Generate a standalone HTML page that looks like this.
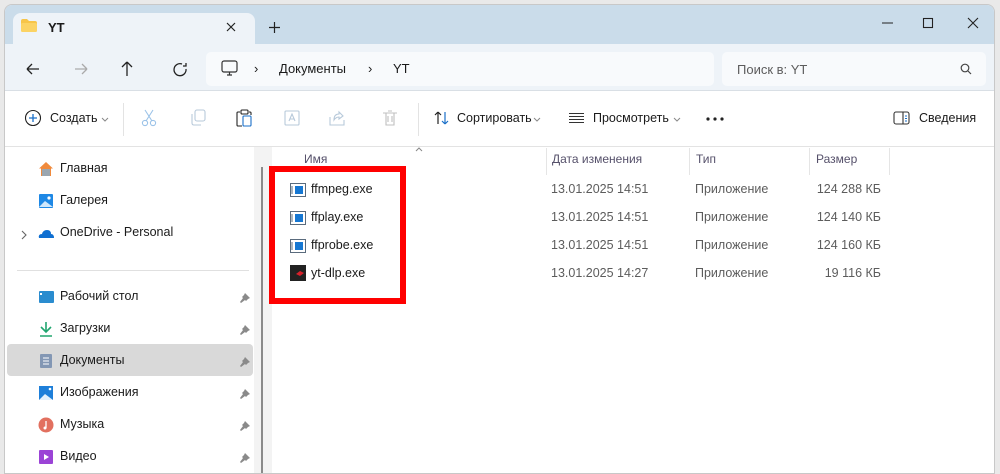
<!DOCTYPE html>
<html><head><meta charset="utf-8"><style>
*{margin:0;padding:0;box-sizing:border-box}
body{width:1000px;height:470px;overflow:hidden;background:#e9e9e9;font-family:"Segoe UI","Liberation Sans","Noto Sans CJK SC",sans-serif;font-size:12.5px;color:#1a1a1a;position:relative}
.win{position:absolute;left:4px;top:4px;width:991px;height:470px;background:#fff;border:1px solid #c8c8c8;border-radius:8px 8px 0 0;overflow:hidden}
.tabbar{position:absolute;left:0;top:0;width:100%;height:40px;background:#cadcea}
.tab{position:absolute;left:8px;top:8px;width:242px;height:36px;background:#eef3f8;border-radius:8px 8px 0 0}
.addr{position:absolute;left:0;top:39px;width:100%;height:47px;background:#eef3f8;border-bottom:1px solid #d9dfe5}
.box{position:absolute;background:#f8fafc;border-radius:5px}
.t{position:absolute;white-space:nowrap}
.tool{position:absolute;left:0;top:86px;width:100%;height:56px;background:#fff;border-bottom:1px solid #e3e3e3}
.side{position:absolute;left:0;top:142px;width:250px;height:330px;background:#fff}
.gut{position:absolute;left:249px;top:142px;width:18px;height:330px;background:#f3f3f3}
.ico{position:absolute;width:16px;height:16px}
.pin{position:absolute;left:234px;width:12px;height:12px}
.hdr{color:#55506a}
.gray{color:#5c5c5c}
</style></head><body>
<div class="win">
 <div class="tabbar"></div>
 <div class="tab"></div>
 <svg style="position:absolute;left:16px;top:14px" width="16" height="13"><path d="M0 2 Q0 0 2 0 H6 L8 2 H14 Q16 2 16 4 V11 Q16 13 14 13 H2 Q0 13 0 11Z" fill="#f7c549"/><rect x="0" y="4" width="16" height="9" rx="1.5" fill="#fbd364"/></svg>
 <div class="t" style="left:43px;top:15px;font-weight:bold;font-size:13px">YT</div>
 <svg style="position:absolute;left:221px;top:17px" width="10" height="10" stroke="#222" stroke-width="1.2"><path d="M1 1L9 9M9 1L1 9"/></svg>
 <svg style="position:absolute;left:264px;top:17px" width="11" height="11" stroke="#222" stroke-width="1.2"><path d="M5.5 0V11M0 5.5H11"/></svg>
 <svg style="position:absolute;left:873px;top:12px" width="110" height="12" stroke="#222" stroke-width="1.1" fill="none"><path d="M4 6H15"/><rect x="45.5" y="1.5" width="9" height="9"/><path d="M90 1L100 11M100 1L90 11"/></svg>

 <div class="addr"></div>
 <svg style="position:absolute;left:20px;top:56px" width="100" height="16" fill="none" stroke="#222" stroke-width="1.3"><path d="M2 8H14M2 8L7 3M2 8L7 13"/><path d="M50 8H62M62 8L57 3M62 8L57 13" stroke="#aaa"/></svg>
 <svg style="position:absolute;left:115px;top:55px" width="80" height="18" fill="none" stroke="#222" stroke-width="1.3"><path d="M7 2V16M7 2L2 7M7 2L12 7"/><path d="M62 4A6 6 0 1 0 66 9M66 3V6H63"/></svg>
 <div class="box" style="left:201px;top:47px;width:508px;height:34px"></div>
 <svg style="position:absolute;left:216px;top:55px" width="18" height="17" fill="none" stroke="#333" stroke-width="1.2"><rect x="1" y="1" width="15" height="11" rx="2"/><path d="M6 15H11M8.5 12V15"/></svg>
 <div class="t" style="left:249px;top:56px;font-size:13px">›</div>
 <div class="t" style="left:274px;top:56px;font-size:13px">Документы</div>
 <div class="t" style="left:363px;top:56px;font-size:13px">›</div>
 <div class="t" style="left:388px;top:56px;font-size:13px">YT</div>
 <div class="box" style="left:717px;top:47px;width:264px;height:34px"></div>
 <div class="t gray" style="left:732px;top:57px;font-size:13px">Поиск в: YT</div>
 <svg style="position:absolute;left:955px;top:58px" width="12" height="12" fill="none" stroke="#444" stroke-width="1.2"><circle cx="5" cy="5" r="3.8"/><path d="M8 8L11 11"/></svg>

 <div class="tool"></div>
 <svg style="position:absolute;left:19px;top:104px" width="18" height="18" fill="none" stroke="#222" stroke-width="1.1"><circle cx="9" cy="9" r="7.5"/><path d="M9 5V13M5 9H13" stroke="#1a6fc8" stroke-width="1.3"/></svg>
 <div class="t" style="left:45px;top:106px">Создать</div>
 <svg style="position:absolute;left:96px;top:112px" width="8" height="5" fill="none" stroke="#888"><path d="M1 1L4 4L7 1"/></svg>
 <div style="position:absolute;left:118px;top:98px;width:1px;height:33px;background:#e3e3e3"></div>
 <svg style="position:absolute;left:135px;top:103px" width="270" height="20" fill="none" stroke-width="1.1">
  <g stroke="#9cc3e8"><circle cx="5" cy="15" r="2.6"/><circle cx="13" cy="15" r="2.6"/><path d="M6 13L13 2M12 13L5 2"/></g>
  <g stroke="#b7c9da"><rect x="55" y="2" width="10" height="11" rx="2"/><path d="M52 6V15Q52 17 54 17H61"/></g>
  <g stroke="#222"><path d="M100 4H98Q97 4 97 5V17Q97 18 98 18H102M109 4H110Q111 4 111 5V7"/><rect x="101" y="2" width="7" height="4" rx="1"/></g><rect x="103" y="8" width="8" height="10" rx="1" stroke="#1a6fc8"/>
  <g stroke="#b7c9da"><rect x="145" y="3" width="14" height="14" rx="1"/><path d="M149 13L152 6L155 13M150 11H154"/></g>
  <g stroke="#b7c9da"><path d="M203 8L199 4V6Q194 6 194 12Q196 9 199 9V11Z"/><path d="M190 9V17H204V12"/></g>
  <g stroke="#c0c0c0"><path d="M243 5H257M246 5V17H254V5M248 3H252M248 8V14M252 8V14"/></g>
 </svg>
 <div style="position:absolute;left:413px;top:98px;width:1px;height:33px;background:#e3e3e3"></div>
 <svg style="position:absolute;left:428px;top:105px" width="18" height="16" fill="none" stroke-width="1.2"><path d="M5 14V2M5 2L2 5M5 2L8 5" stroke="#222"/><path d="M12 2V14M12 14L9 11M12 14L15 11" stroke="#1a6fc8"/></svg>
 <div class="t" style="left:452px;top:106px">Сортировать</div>
 <svg style="position:absolute;left:528px;top:112px" width="8" height="5" fill="none" stroke="#888"><path d="M1 1L4 4L7 1"/></svg>
 <svg style="position:absolute;left:563px;top:107px" width="18" height="12" stroke="#333" stroke-width="1"><path d="M1 1.5H16M1 4.5H16M1 7.5H16M1 10.5H16"/></svg>
 <div class="t" style="left:588px;top:106px">Просмотреть</div>
 <svg style="position:absolute;left:668px;top:112px" width="8" height="5" fill="none" stroke="#888"><path d="M1 1L4 4L7 1"/></svg>
 <svg style="position:absolute;left:701px;top:112px" width="18" height="4" fill="#222"><circle cx="2" cy="2" r="1.6"/><circle cx="9" cy="2" r="1.6"/><circle cx="16" cy="2" r="1.6"/></svg>
 <svg style="position:absolute;left:888px;top:106px" width="18" height="14" fill="none" stroke="#333" stroke-width="1.1"><rect x="1" y="1" width="15" height="12" rx="2"/><path d="M10 1V13" /><path d="M12 5H14M12 7.5H14M12 10H14" stroke="#1a6fc8"/></svg>
 <div class="t" style="left:914px;top:106px">Сведения</div>

 <div class="side"></div>
 <div class="gut"></div>
 <div style="position:absolute;left:256px;top:162px;width:2px;height:310px;background:#8a8a8a"></div>
 <div style="position:absolute;left:12px;top:265px;width:232px;height:1px;background:#e0e0e0"></div>
 <div style="position:absolute;left:2px;top:339px;width:246px;height:32px;background:#d9d9d9;border-radius:4px"></div>

 <svg class="ico" style="left:33px;top:156px" viewBox="0 0 16 16"><path d="M8 1L1 7.5H3V15H13V7.5H15Z" fill="#f08a3c"/><rect x="4" y="8" width="8" height="7" fill="#9aa6b0"/></svg>
 <div class="t" style="left:55px;top:156px">Главная</div>
 <svg class="ico" style="left:33px;top:188px" viewBox="0 0 16 16"><rect x="1" y="1" width="14" height="14" rx="1" fill="#1e88e5"/><path d="M1 14L7 8L15 14Z" fill="#cfe7fb"/><circle cx="11" cy="5" r="1.6" fill="#fff"/></svg>
 <div class="t" style="left:55px;top:188px">Галерея</div>
 <svg style="position:absolute;left:16px;top:225px" width="6" height="10" fill="none" stroke="#666" stroke-width="1.1"><path d="M1 1L5 5L1 9"/></svg>
 <svg class="ico" style="left:33px;top:220px" viewBox="0 0 16 16"><path d="M1 13Q0 9 4 9Q5 5 9 5Q13 5 13 9Q16 9 16 13Z" fill="#0f6fd1"/></svg>
 <div class="t" style="left:55px;top:220px">OneDrive - Personal</div>

 <svg class="ico" style="left:33px;top:284px" viewBox="0 0 16 16"><rect x="1" y="2" width="15" height="12" rx="1" fill="#2a8ccf"/><rect x="2" y="4" width="2" height="2" fill="#fff"/></svg>
 <div class="t" style="left:55px;top:284px">Рабочий стол</div>
 <svg class="ico" style="left:33px;top:316px" viewBox="0 0 16 16" fill="none" stroke="#20a56f" stroke-width="1.6"><path d="M8 1V11M3 6L8 11L13 6M2 15H14"/></svg>
 <div class="t" style="left:55px;top:316px">Загрузки</div>
 <svg class="ico" style="left:33px;top:348px" viewBox="0 0 16 16"><rect x="2" y="1" width="12" height="14" rx="1" fill="#8397b4"/><path d="M5 5H11M5 8H11M5 11H11" stroke="#fff"/></svg>
 <div class="t" style="left:55px;top:348px">Документы</div>
 <svg class="ico" style="left:33px;top:380px" viewBox="0 0 16 16"><rect x="1" y="1" width="14" height="14" fill="#1e7fd9"/><path d="M1 15L7 9L15 15Z" fill="#e3f1fc"/><circle cx="12" cy="4" r="1.3" fill="#fff"/></svg>
 <div class="t" style="left:55px;top:380px">Изображения</div>
 <svg class="ico" style="left:33px;top:412px" viewBox="0 0 16 16"><circle cx="8" cy="8" r="7.5" fill="#e2705f"/><path d="M8 4V11" stroke="#fff" stroke-width="1.3"/><circle cx="7" cy="11" r="1.5" fill="#fff"/></svg>
 <div class="t" style="left:55px;top:412px">Музыка</div>
 <svg class="ico" style="left:33px;top:444px" viewBox="0 0 16 16"><rect x="1" y="1" width="14" height="14" rx="1" fill="#9b43d6"/><path d="M6 5L11 8L6 11Z" fill="#fff"/></svg>
 <div class="t" style="left:55px;top:444px">Видео</div>
 <svg class="pin" style="top:287px" viewBox="0 0 12 12"><path d="M6 1L11 6L9 7L7 9L6 8L2 11L1 10L4 6L3 5L5 3Z" fill="#8a8a8a"/></svg>
 <svg class="pin" style="top:319px" viewBox="0 0 12 12"><path d="M6 1L11 6L9 7L7 9L6 8L2 11L1 10L4 6L3 5L5 3Z" fill="#8a8a8a"/></svg>
 <svg class="pin" style="top:351px" viewBox="0 0 12 12"><path d="M6 1L11 6L9 7L7 9L6 8L2 11L1 10L4 6L3 5L5 3Z" fill="#8a8a8a"/></svg>
 <svg class="pin" style="top:383px" viewBox="0 0 12 12"><path d="M6 1L11 6L9 7L7 9L6 8L2 11L1 10L4 6L3 5L5 3Z" fill="#8a8a8a"/></svg>
 <svg class="pin" style="top:415px" viewBox="0 0 12 12"><path d="M6 1L11 6L9 7L7 9L6 8L2 11L1 10L4 6L3 5L5 3Z" fill="#8a8a8a"/></svg>
 <svg class="pin" style="top:447px" viewBox="0 0 12 12"><path d="M6 1L11 6L9 7L7 9L6 8L2 11L1 10L4 6L3 5L5 3Z" fill="#8a8a8a"/></svg>

 <div class="t hdr" style="left:299px;top:147px;font-size:12px">Имя</div>
 <svg style="position:absolute;left:410px;top:142px" width="8" height="5" fill="none" stroke="#888"><path d="M1 4L4 1L7 4"/></svg>
 <div style="position:absolute;left:541px;top:143px;width:1px;height:27px;background:#e5e5e5"></div>
 <div style="position:absolute;left:684px;top:143px;width:1px;height:27px;background:#e5e5e5"></div>
 <div style="position:absolute;left:804px;top:143px;width:1px;height:27px;background:#e5e5e5"></div>
 <div style="position:absolute;left:884px;top:143px;width:1px;height:27px;background:#e5e5e5"></div>
 <div class="t hdr" style="left:547px;top:147px;font-size:12px">Дата изменения</div>
 <div class="t hdr" style="left:691px;top:147px;font-size:12px">Тип</div>
 <div class="t hdr" style="left:811px;top:147px;font-size:12px">Размер</div>

 <div style="position:absolute;left:264px;top:161px;width:137px;height:138px;border:6px solid #ff0000"></div>
</div>
<div style="position:absolute;left:0;top:0">
 <svg class="ico" style="left:290px;top:182px" viewBox="0 0 16 16"><rect x="0.5" y="1.5" width="15" height="13" fill="#fff" stroke="#5a6b7d"/><rect x="5" y="4" width="8" height="8" fill="#1677d2"/><path d="M2 4V12" stroke="#5a6b7d"/></svg>
 <div class="t" style="left:311px;top:182px">ffmpeg.exe</div>
 <svg class="ico" style="left:290px;top:210px" viewBox="0 0 16 16"><rect x="0.5" y="1.5" width="15" height="13" fill="#fff" stroke="#5a6b7d"/><rect x="5" y="4" width="8" height="8" fill="#1677d2"/><path d="M2 4V12" stroke="#5a6b7d"/></svg>
 <div class="t" style="left:311px;top:210px">ffplay.exe</div>
 <svg class="ico" style="left:290px;top:238px" viewBox="0 0 16 16"><rect x="0.5" y="1.5" width="15" height="13" fill="#fff" stroke="#5a6b7d"/><rect x="5" y="4" width="8" height="8" fill="#1677d2"/><path d="M2 4V12" stroke="#5a6b7d"/></svg>
 <div class="t" style="left:311px;top:238px">ffprobe.exe</div>
 <svg class="ico" style="left:290px;top:265px" viewBox="0 0 16 16"><rect width="16" height="16" fill="#222"/><path d="M6 9L10 6L14 8L10 11Z" fill="#d8202a"/></svg>
 <div class="t" style="left:311px;top:266px">yt-dlp.exe</div>
 <div class="t gray" style="left:551px;top:182px">13.01.2025 14:51</div><div class="t gray" style="left:695px;top:182px">Приложение</div><div class="t gray" style="left:782px;top:182px;width:99px;text-align:right">124 288 КБ</div>
 <div class="t gray" style="left:551px;top:210px">13.01.2025 14:51</div><div class="t gray" style="left:695px;top:210px">Приложение</div><div class="t gray" style="left:782px;top:210px;width:99px;text-align:right">124 140 КБ</div>
 <div class="t gray" style="left:551px;top:238px">13.01.2025 14:51</div><div class="t gray" style="left:695px;top:238px">Приложение</div><div class="t gray" style="left:782px;top:238px;width:99px;text-align:right">124 160 КБ</div>
 <div class="t gray" style="left:551px;top:266px">13.01.2025 14:27</div><div class="t gray" style="left:695px;top:266px">Приложение</div><div class="t gray" style="left:782px;top:266px;width:99px;text-align:right">19 116 КБ</div>
</div>
</body></html>
